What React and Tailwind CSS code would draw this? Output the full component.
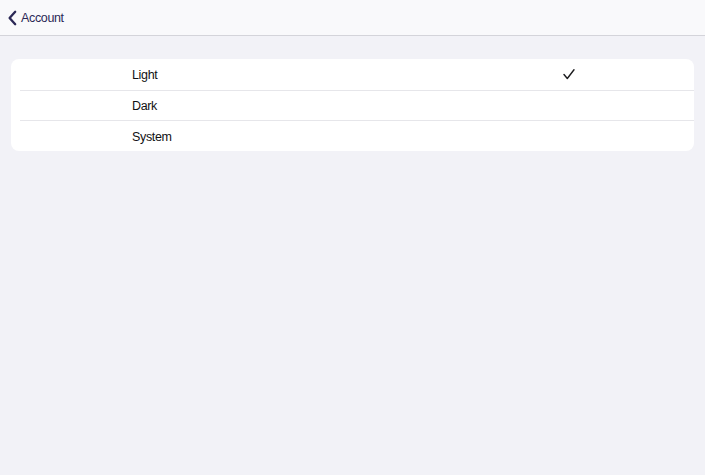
export default function App() {
  const rows = [
    { label: "Light", checked: true },
    { label: "Dark" },
    { label: "System" },
  ];
  return (
    <div className="w-[705px] h-[475px] bg-[#f2f2f7] flex flex-col" style={{ fontFamily: "'Liberation Sans', Arial, sans-serif" }}>
      <div className="h-[36px] bg-[#f9f9fb] border-b border-[#d4d4da] flex items-center pl-[8px] shrink-0">
        <svg width="9" height="16" viewBox="0 0 9 16" className="mr-[4px] mt-[1px]">
          <path d="M7.2 1.8 L1.6 8 L7.2 14.2" fill="none" stroke="#2b2856" strokeWidth="2.3" strokeLinecap="round" strokeLinejoin="round" />
        </svg>
        <span className="text-[12.5px] tracking-[-0.35px] text-[#2b2856] mt-[1px]">Account</span>
      </div>
      <div className="px-[11px] pt-[23px]">
        <div className="bg-white rounded-[8px] pl-[9px]">
          {rows.map((r, i) => (
            <div key={r.label} className={`h-[30.67px] flex items-center ${i > 0 ? "border-t border-[#e6e6ea]" : ""}`}>
              <span className="ml-[112px] text-[12.5px] tracking-[-0.35px] text-[#111113] w-[400px] mt-[2px]">{r.label}</span>
              {r.checked && (
                <svg width="12" height="11" viewBox="0 0 12 11" className="ml-[31px] mt-[1px]">
                  <path d="M1 5.5 L4.3 9.5 L11 0.8" fill="none" stroke="#1c1c1e" strokeWidth="1.4" strokeLinecap="round" strokeLinejoin="round" />
                </svg>
              )}
            </div>
          ))}
        </div>
      </div>
    </div>
  );
}
